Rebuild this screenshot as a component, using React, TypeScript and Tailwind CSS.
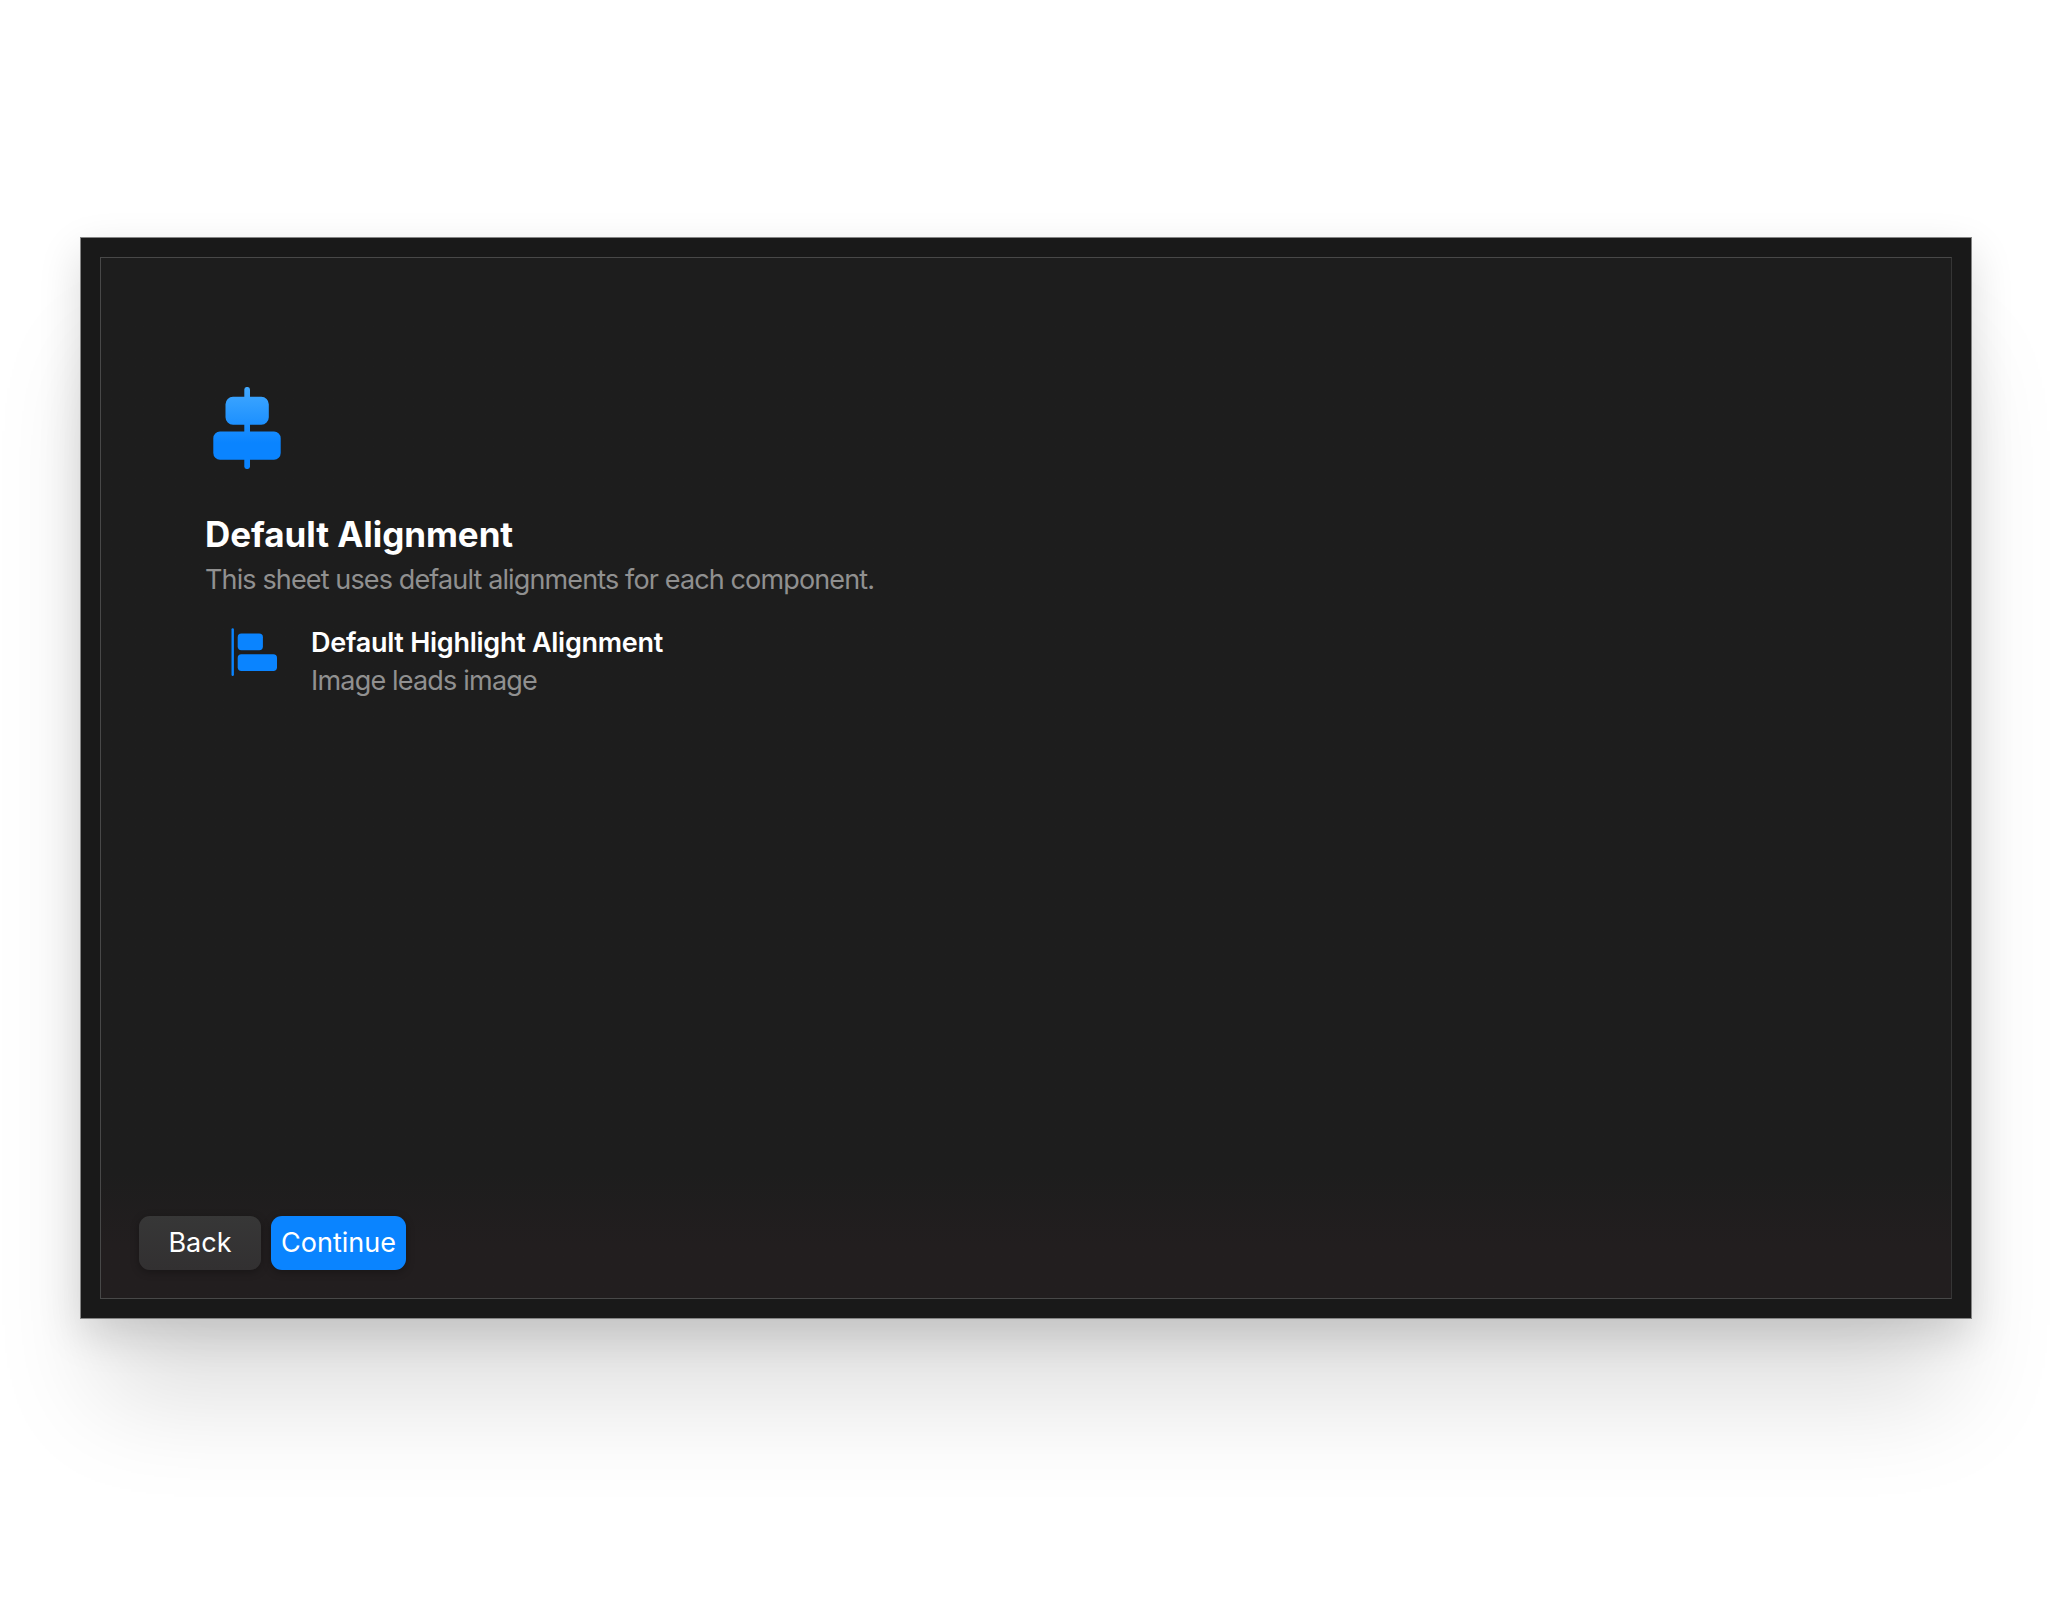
function CenterAlignIcon() {
  return (
    <svg width="68" height="82" viewBox="0 0 68 82" className="ml-2 block">
      <defs>
        <linearGradient id="symbol" x1="0" y1="0" x2="0" y2="82" gradientUnits="userSpaceOnUse">
          <stop offset="0" stopColor="#42a9ff" />
          <stop offset="0.68" stopColor="#0a84ff" />
        </linearGradient>
      </defs>
      <g fill="url(#symbol)">
        <path d="M31.3 2.8a2.85 2.85 0 0 1 5.7 0V79.2a2.85 2.85 0 0 1-5.7 0Z" />
        <path d="M20 9.8H48.3a7.5 7.5 0 0 1 7.5 7.5V30.3a7.5 7.5 0 0 1-7.5 7.5H20a7.5 7.5 0 0 1-7.5-7.5V17.3a7.5 7.5 0 0 1 7.5-7.5Z" />
        <path d="M7 44.6H61a6.7 6.7 0 0 1 6.7 6.7V66a6.7 6.7 0 0 1-6.7 6.7H7A6.7 6.7 0 0 1 .3 66V51.3A6.7 6.7 0 0 1 7 44.6Z" />
      </g>
    </svg>
  );
}

function LeadingAlignIcon() {
  return (
    <svg width="46" height="48" viewBox="0 0 46 48" className="mt-[3px] block shrink-0" fill="#0a84ff">
      <rect x="0.5" y="0.2" width="2.4" height="47.8" rx="1.2" />
      <rect x="6.7" y="5.6" width="25.2" height="16.6" rx="3.7" />
      <rect x="6.7" y="26.3" width="39.3" height="16.6" rx="3.7" />
    </svg>
  );
}

export default function App() {
  return (
    <div className="min-h-[1601px] w-full bg-white px-20 pt-[237px] font-['Inter',sans-serif]">
      <div className="h-[1082px] w-[1892px] border border-[#858585] bg-[#191919] p-[19px] shadow-[0_15px_40px_rgba(0,0,0,0.14),0_100px_100px_-20px_rgba(0,0,0,0.13)]">
        <main className="flex h-full flex-col items-start border border-[#484848] border-r-[#353535] bg-[#1d1d1d] bg-linear-to-b from-[#1d1d1d] from-88% to-[#221e1f] to-95% pt-[129px]">
          <div className="ml-[104px]">
            <CenterAlignIcon />
            <h1 className="mt-11 text-[35px] leading-[42px] font-bold tracking-[-0.05px] text-white">
              Default Alignment
            </h1>
            <p className="mt-[7px] text-[27px] leading-9 tracking-[-0.87px] text-[#909090]">
              This sheet uses default alignments for each component.
            </p>
            <section className="mt-[27px] flex items-start gap-[34px] pl-[26px]">
              <LeadingAlignIcon />
              <div>
                <h2 className="text-[27px] leading-9 font-semibold tracking-[-0.27px] text-white">
                  Default Highlight Alignment
                </h2>
                <p className="mt-0.5 text-[27px] leading-9 tracking-[-0.81px] text-[#909090]">
                  Image leads image
                </p>
              </div>
            </section>
          </div>
          <footer className="mt-auto mb-7 ml-[38px] flex gap-2.5">
            <button className="h-[54px] w-[122px] rounded-[11px] bg-linear-to-b from-[#373737] to-[#323031] text-[27px] leading-9 text-white shadow-[0_2px_8px_rgba(0,0,0,0.3)]">
              Back
            </button>
            <button className="h-[54px] w-[135px] rounded-[11px] bg-[#0a84ff] text-[27px] leading-9 text-white shadow-[0_2px_8px_rgba(0,0,0,0.3)]">
              Continue
            </button>
          </footer>
        </main>
      </div>
    </div>
  );
}
